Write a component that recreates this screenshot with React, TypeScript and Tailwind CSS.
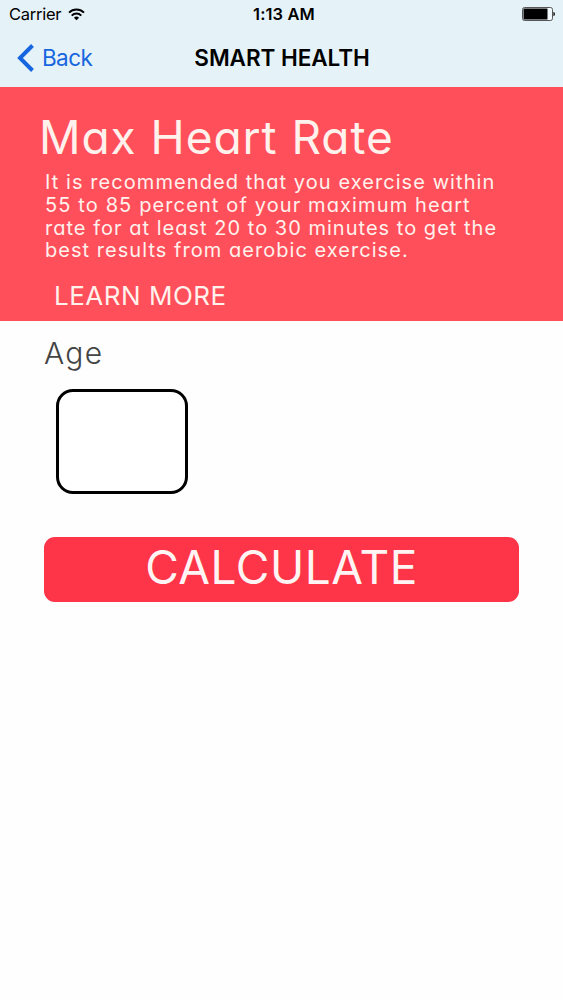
import { useState } from 'react';

const DESCRIPTION = [
  { text: 'It is recommended that you exercise within', className: 'tracking-[1.07px]' },
  { text: '55 to 85 percent of your maximum heart', className: 'tracking-[1.12px]' },
  { text: 'rate for at least 20 to 30 minutes to get the', className: 'tracking-[1.02px]' },
  { text: 'best results from aerobic exercise.', className: 'tracking-[1.04px]' },
];

function WifiIcon() {
  return (
    <svg className="h-[13px] w-[17px]" viewBox="0 0 17 13" fill="none" stroke="#000" strokeWidth={2}>
      <path d="M1 4.6a10.6 10.6 0 0 1 15 0" />
      <path d="M3.7 7.6a6.8 6.8 0 0 1 9.6 0" />
      <path d="M8.5 12.3 5.9 9.7a3.7 3.7 0 0 1 5.2 0z" fill="#000" stroke="none" />
    </svg>
  );
}

function BatteryIcon() {
  return (
    <svg className="h-[14px] w-[33px]" viewBox="0 0 33 14">
      <rect x="0.5" y="0.5" width="30" height="13" rx="2" fill="#fff" fillOpacity="0.5" stroke="#555" />
      <rect x="1.5" y="1.5" width="24" height="11" rx="0.5" fill="#000" />
      <path d="M31.4 5q1.6 0 1.6 2t-1.6 2z" fill="#111" />
    </svg>
  );
}

function StatusBar() {
  return (
    <div className="grid h-7 grid-cols-[1fr_auto_1fr] items-center pl-[9px] pr-[8px] text-[16.5px] leading-7">
      <div className="flex items-center gap-[7px]">
        <span className="tracking-[-0.25px]">Carrier</span>
        <WifiIcon />
      </div>
      <span className="pl-1 text-center font-semibold tracking-[0.1px]">1:13 AM</span>
      <div className="flex justify-end">
        <BatteryIcon />
      </div>
    </div>
  );
}

function NavBar() {
  return (
    <div className="grid h-[59px] grid-cols-[1fr_auto_1fr] items-center pl-[17px] pr-4">
      <button type="button" className="flex items-center gap-[7px] text-[22.5px] text-[#1766df]">
        <svg className="h-[28px] w-[18px]" viewBox="0 0 18 28" fill="none" stroke="currentColor" strokeWidth={4}>
          <path d="M15.5 1.5 3 14l12.5 12.5" />
        </svg>
        <span className="tracking-[-0.6px]">Back</span>
      </button>
      <h1 className="text-[22.5px] font-semibold tracking-[-0.05px]">SMART HEALTH</h1>
    </div>
  );
}

export default function App() {
  const [age, setAge] = useState('');

  return (
    <div className="h-[1000px] w-[563px] overflow-hidden bg-[#fefefe] font-['Inter',sans-serif]">
      <header className="h-[87px] bg-[#e5f3f8] text-black">
        <StatusBar />
        <NavBar />
      </header>

      <section className="h-[234px] bg-[#ff4f5b] pt-[22px] text-[#fff1ec] [font-feature-settings:'cv11']">
        <h2 className="pl-[39px] text-[46px] leading-[56px] tracking-[0.95px] whitespace-nowrap">
          Max Heart Rate
        </h2>
        <p className="mt-[6px] pl-[45px] text-[20px] leading-[22.8px] whitespace-nowrap">
          {DESCRIPTION.map((line) => (
            <span key={line.text} className={`block w-fit ${line.className}`}>
              {line.text}
            </span>
          ))}
        </p>
        <button type="button" className="mt-[18px] ml-[54px] block text-[26px] leading-8 tracking-[0.5px]">
          LEARN MORE
        </button>
      </section>

      <main className="pl-11 [font-feature-settings:'cv11']">
        <label
          htmlFor="age"
          className="block pt-[13px] text-[30px] leading-[38px] font-light tracking-[1.3px] text-[#444]"
        >
          Age
        </label>
        <input
          id="age"
          value={age}
          onChange={(e) => setAge(e.target.value)}
          className="mt-[17px] ml-[12px] block h-[105px] w-[132px] rounded-[17px] border-[3px] border-black bg-white text-center text-4xl outline-none"
        />
        <button
          type="button"
          className="mt-[43px] flex h-[65px] w-[475px] items-center justify-center rounded-[11px] bg-[#fe3448] pb-[5px] text-[46px] leading-none tracking-[0.5px] text-[#fff4f4]"
        >
          CALCULATE
        </button>
      </main>
    </div>
  );
}
